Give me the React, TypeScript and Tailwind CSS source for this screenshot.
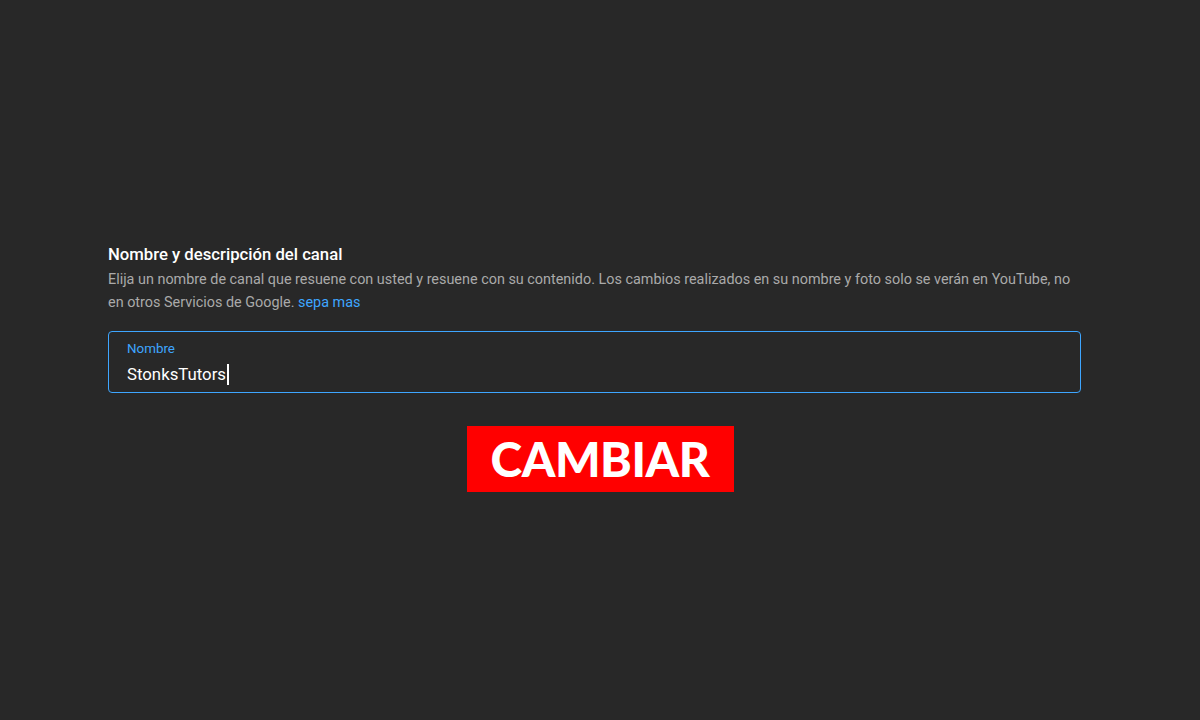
export default function App() {
  return (
    <div className="w-[1200px] h-[720px] bg-[#282828] overflow-hidden" style={{ fontFamily: "Roboto, 'Liberation Sans', sans-serif" }}>
      <div className="pt-[243px] pl-[108px] w-[1081px]">
        <div className="text-[16.7px] leading-[24px] font-medium text-white">Nombre y descripción del canal</div>
        <p className="mt-[2px] text-[14.4px] leading-[22.5px] text-[#aaaaaa]">
          Elija un nombre de canal que resuene con usted y resuene con su contenido. Los cambios realizados en su nombre y foto solo se verán en YouTube, no en otros Servicios de Google. <a className="text-[#3ea6ff]">sepa mas</a>
        </p>
        <div className="mt-[17px] h-[62px] border border-[#3ea6ff] rounded-[4px] px-[18px] pt-[9px]">
          <div className="text-[13.4px] leading-[16px] text-[#3ea6ff]">Nombre</div>
          <div className="mt-[6px] text-[16.8px] leading-[22px] text-white flex items-center">
            StonksTutors<span className="inline-block w-[1.5px] h-[21px] bg-white ml-[1px]"></span>
          </div>
        </div>
      </div>
      <div className="flex justify-center mt-[33px]">
        <div className="w-[267px] h-[66px] bg-[#ff0000] flex items-center justify-center text-white text-[48px] font-black tracking-[-0.5px]" style={{ fontFamily: "Lato, 'Liberation Sans', sans-serif" }}>
          CAMBIAR
        </div>
      </div>
    </div>
  );
}
